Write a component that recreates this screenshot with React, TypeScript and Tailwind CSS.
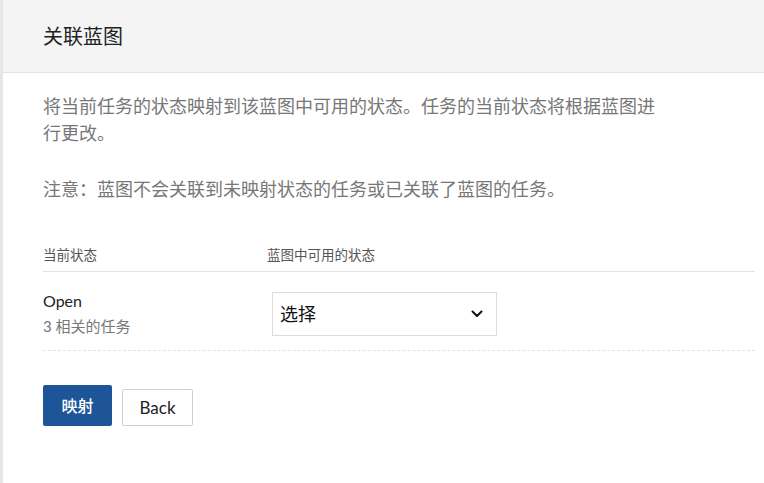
import React from "react";

const font = "font-['Lato','Noto_Sans_CJK_SC',sans-serif]";

export default function App() {
  return (
    <div className={`${font} h-[483px] w-[764px] overflow-hidden border-l-[3px] border-[#e6e6e6] bg-white`}>
      {/* Header */}
      <div className="flex h-[73px] items-center border-b border-[#e2e2e2] bg-[#f4f4f4] pl-[40px]">
        <h1 className="text-[20px] leading-[28px] text-[#222]">关联蓝图</h1>
      </div>

      <div className="pl-[40px] pr-[9px] pt-[20px]">
        <p className="max-w-[625px] text-[18px] leading-[27px] text-[#777]">
          将当前任务的状态映射到该蓝图中可用的状态。任务的当前状态将根据蓝图进行更改。
        </p>
        <p className="mt-[29px] text-[18px] leading-[27px] text-[#777]">
          注意：蓝图不会关联到未映射状态的任务或已关联了蓝图的任务。
        </p>

        {/* Table */}
        <div className="mt-[42px] flex border-b border-[#e2e2e2] pb-[6px] text-[13.5px] leading-[20px] text-[#555]">
          <div className="w-[224px]">当前状态</div>
          <div>蓝图中可用的状态</div>
        </div>
        <div className="flex items-start border-b border-dashed border-[#e3e3e3] pb-[14px] pt-[19px]">
          <div className="w-[224px]">
            <div className="text-[16px] leading-[20px] text-[#222]">Open</div>
            <div className="mt-[5px] text-[15px] leading-[20px] text-[#777]">3 相关的任务</div>
          </div>
          <button
            type="button"
            className="ml-[5px] mt-[1px] flex h-[44px] w-[225px] items-center justify-between border border-[#dcdcdc] bg-white pl-[7px] pr-[13px] text-[18px] text-[#111]"
          >
            <span>选择</span>
            <svg width="12" height="8" viewBox="0 0 12 8" fill="none">
              <path d="M1.5 1.5L6 6L10.5 1.5" stroke="#111" strokeWidth="2" strokeLinecap="round" strokeLinejoin="round" />
            </svg>
          </button>
        </div>

        {/* Actions */}
        <div className="mt-[34px] flex items-end gap-[10px]">
          <button type="button" className="h-[41px] w-[69px] rounded-[2px] bg-[#1e5598] text-[16px] font-medium text-white">
            映射
          </button>
          <button type="button" className="h-[37px] w-[71px] rounded-[2px] border border-[#cfcfcf] bg-white text-[17px] text-[#222]">
            Back
          </button>
        </div>
      </div>
    </div>
  );
}
